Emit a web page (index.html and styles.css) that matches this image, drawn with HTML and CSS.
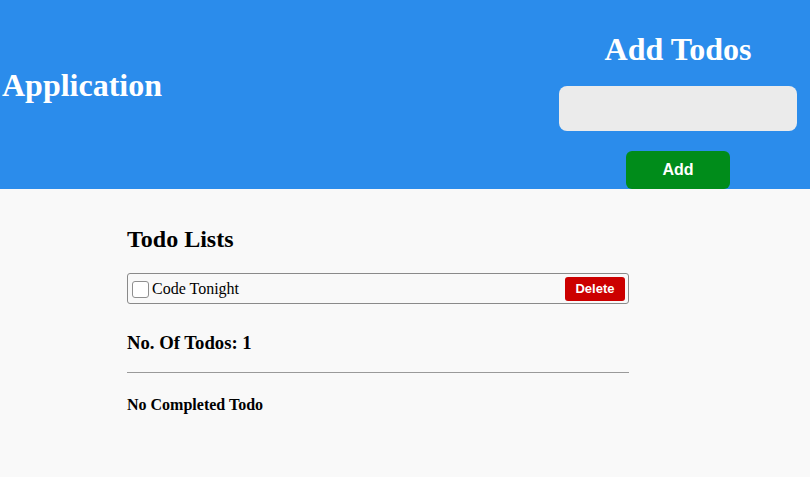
FILE: index.html
```html
<!DOCTYPE html>
<html>
<head>
<meta charset="utf-8">
<link rel="stylesheet" href="styles.css">
</head>
<body>
<header class="header">
  <h1 class="brand">Application</h1>
  <div class="add-col">
    <h1 class="add-title">Add Todos</h1>
    <input class="add-input" type="text">
    <button class="add-btn">Add</button>
  </div>
</header>
<main class="main">
  <h2 class="list-title">Todo Lists</h2>
  <div class="todo">
    <span class="check"></span>
    <span class="todo-text">Code Tonight</span>
    <button class="del-btn">Delete</button>
  </div>
  <h3 class="count">No. Of Todos: 1</h3>
  <hr class="rule">
  <h4 class="done">No Completed Todo</h4>
</main>
</body>
</html>
```
FILE: styles.css
```css
html, body {
  margin: 0;
  padding: 0;
  background: #f9f9f9;
  font-family: "Liberation Serif", "Times New Roman", serif;
  color: #000;
}
.header {
  background: #2b8ceb;
  height: 189px;
  display: flex;
  justify-content: space-between;
  align-items: flex-start;
  padding: 0 13px 0 2px;
}
.brand {
  margin: 67px 0 0 0;
  font-size: 32px;
  font-weight: bold;
  color: #fff;
  line-height: 37px;
}
.add-col {
  width: 238px;
  display: flex;
  flex-direction: column;
  align-items: center;
}
.add-title {
  margin: 31px 0 0 0;
  font-size: 32px;
  line-height: 37px;
  color: #fff;
}
.add-input {
  margin-top: 18px;
  width: 238px;
  height: 45px;
  box-sizing: border-box;
  border: none;
  border-radius: 8px;
  background: #ebebeb;
  outline: none;
}
.add-btn {
  margin-top: 20px;
  width: 104px;
  height: 38px;
  border: none;
  border-radius: 6px;
  background: #008c1a;
  color: #fff;
  font-family: "Liberation Sans", Arial, sans-serif;
  font-weight: bold;
  font-size: 16px;
}
.main {
  width: 502px;
  margin: 0 0 0 127px;
  padding-top: 36px;
}
.list-title {
  margin: 0;
  font-size: 24px;
  line-height: 28px;
}
.todo {
  margin-top: 20px;
  height: 31px;
  box-sizing: border-box;
  border: 1px solid #8a8a8a;
  border-radius: 3px;
  display: flex;
  align-items: center;
  padding: 0 3px 0 4px;
}
.check {
  width: 17px;
  height: 17px;
  box-sizing: border-box;
  border: 1px solid #8f8f8f;
  border-radius: 3px;
  background: #fff;
  margin-top: 1px;
}
.todo-text {
  margin-left: 3px;
  font-size: 16px;
  flex: 1;
}
.del-btn {
  width: 60px;
  height: 24px;
  border: none;
  border-radius: 3px;
  background: #cc0000;
  color: #fff;
  font-family: "Liberation Sans", Arial, sans-serif;
  font-weight: bold;
  font-size: 13px;
  padding: 0;
}
.count {
  margin: 28px 0 0 0;
  font-size: 18.72px;
  line-height: 22px;
}
.rule {
  margin: 18px 0 0 0;
  border: none;
  border-top: 1px solid #9a9a9a;
  height: 0;
}
.done {
  margin: 23px 0 0 0;
  font-size: 16px;
  line-height: 18px;
}
```
